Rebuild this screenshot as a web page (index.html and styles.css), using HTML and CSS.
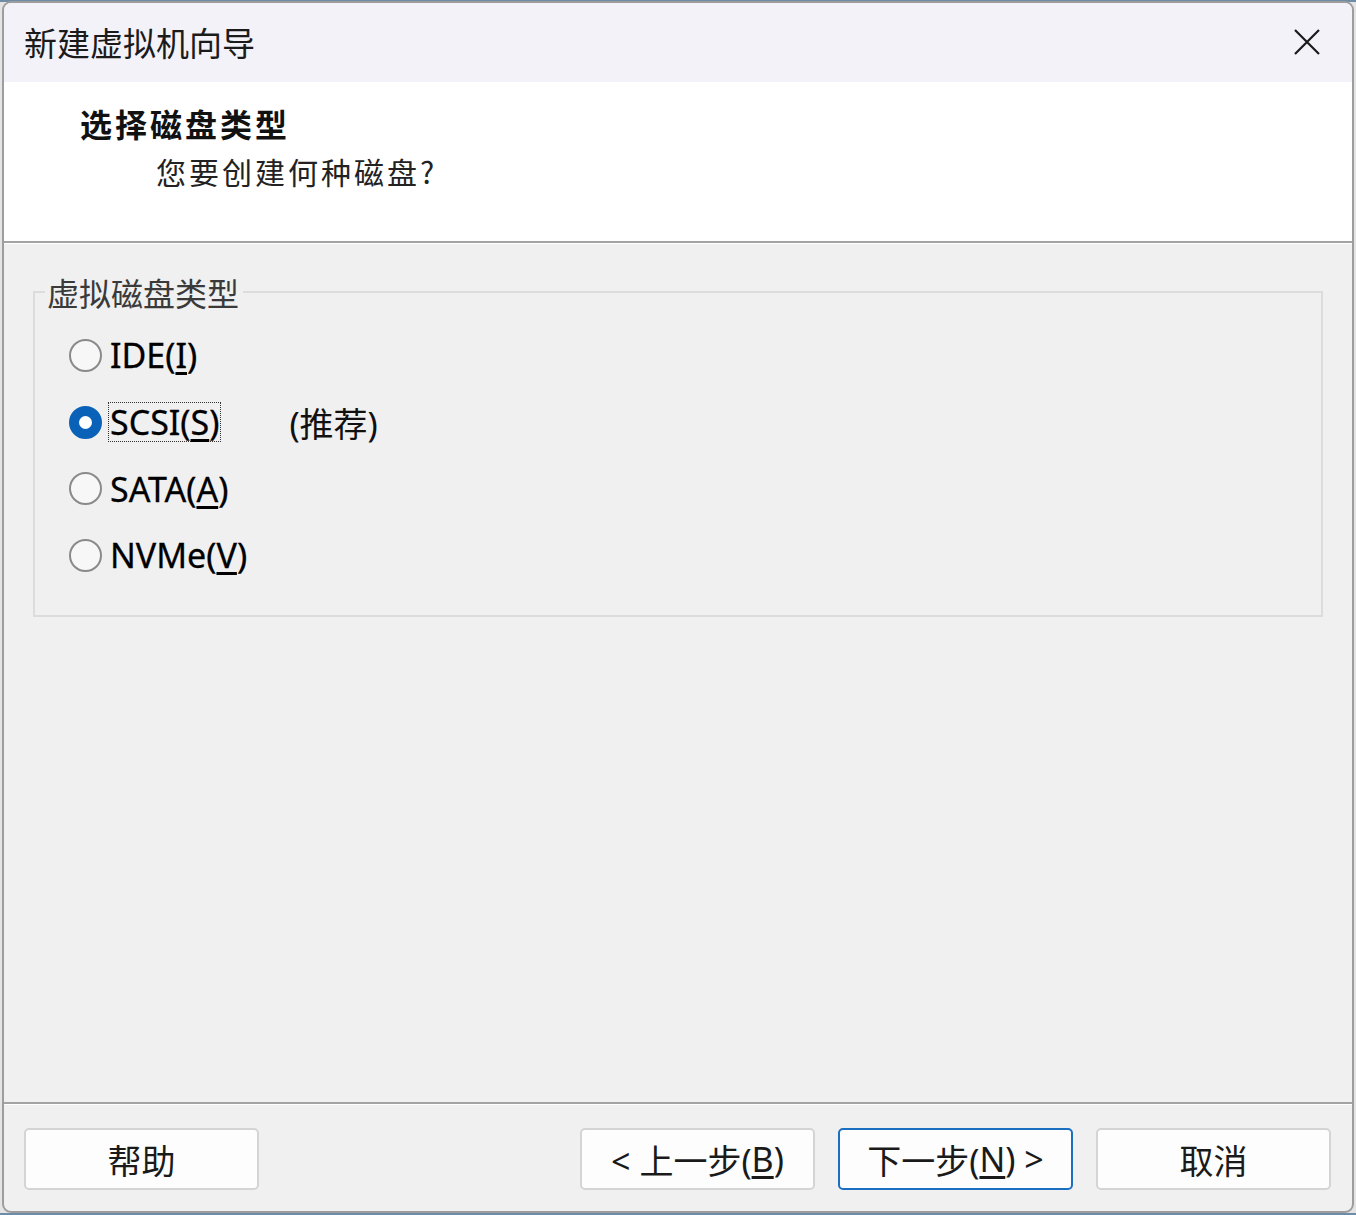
FILE: index.html
```html
<!DOCTYPE html>
<html>
<head>
    <meta charset="UTF-8">
    <title>新建虚拟机向导</title>
    <link rel="stylesheet" href="styles.css">
</head>
<body>
<div class="window">
    <div class="titlebar">
        <span class="title">新建虚拟机向导</span>
        <svg class="close" width="26" height="26" viewBox="0 0 26 26">
            <path d="M1 1 L25 25 M25 1 L1 25" stroke="#1a1a1a" stroke-width="2.2" fill="none"/>
        </svg>
    </div>
    <div class="header">
        <div class="head-title">选择磁盘类型</div>
        <div class="head-sub">您要创建何种磁盘?</div>
    </div>
    <div class="content">
        <fieldset class="group">
            <legend>虚拟磁盘类型</legend>
            <div class="row">
                <span class="radio"></span>
                <span class="label">IDE(<u>I</u>)</span>
            </div>
            <div class="row">
                <span class="radio checked"></span>
                <span class="label focus">SCSI(<u>S</u>)</span>
                <span class="note">(推荐)</span>
            </div>
            <div class="row">
                <span class="radio"></span>
                <span class="label">SATA(<u>A</u>)</span>
            </div>
            <div class="row">
                <span class="radio"></span>
                <span class="label">NVMe(<u>V</u>)</span>
            </div>
        </fieldset>
    </div>
    <div class="footer">
        <div class="btn">帮助</div>
        <div class="spacer"></div>
        <div class="btn">&lt; 上一步(<u>B</u>)</div>
        <div class="btn primary">下一步(<u>N</u>) &gt;</div>
        <div class="btn">取消</div>
    </div>
</div>
</body>
</html>
```

FILE: styles.css
```css
*{ margin:0; padding:0; box-sizing:border-box;}
body{
    background: linear-gradient(#6f8ca6 0, #6f8ca6 2px, #e4e4e4 2px);
    font-family: "Noto Sans", "Noto Sans CJK SC", sans-serif;
    color: #111;
}
.window{
    display: flex;
    flex-direction: column;
    height: 1212px;
    margin: 1px 2px 0 2px;
    border: 2px solid #9d9d9d;
    border-radius: 9px;
    overflow: hidden;
    background: #f0f0f0;
}
.titlebar{
    display: flex;
    align-items: center;
    justify-content: space-between;
    height: 79px;
    padding: 0 32px 2px 20px;
    background: #f3f2f8;
}
.title{
    font-family: "Noto Sans CJK SC", sans-serif;
    font-size: 33px;
    color: #1b1b1b;
}
.header{
    height: 161px;
    padding: 18px 0 0 76px;
    background: #fff;
    border-bottom: 2px solid #a3a3a3;
    box-shadow: 0 1px 0 #fff;
}
.head-title{
    font-family: "Noto Sans CJK SC", sans-serif;
    font-weight: bold;
    font-size: 32px;
    line-height: 46px;
    letter-spacing: 3px;
}
.head-sub{
    font-family: "Noto Sans CJK SC", sans-serif;
    font-size: 30px;
    line-height: 50px;
    padding-left: 76px;
    letter-spacing: 3px;
    color: #222;
}
.content{
    flex: 1;
    padding: 28px 29px 0 29px;
    border-bottom: 2px solid #a3a3a3;
    box-shadow: 0 1px 0 #fff;
}
.group{
    border: 2px solid #dcdcdc;
    padding: 9px 0 26px 0;
}
.group legend{
    margin-left: 10px;
    padding: 0 4px 0 2px;
    font-family: "Noto Sans CJK SC", sans-serif;
    font-size: 32px;
    line-height: 42px;
    color: #3a3a3a;
}
.row{
    display: flex;
    align-items: center;
    height: 66.7px;
    padding-left: 34px;
}
.radio{
    width: 33px;
    height: 33px;
    border: 2px solid #8a8a8a;
    border-radius: 50%;
    background: #f7f7f7;
    margin-right: 6px;
}
.radio.checked{
    border: 10px solid #0a62b8;
    background: #fff;
}
.label{
    font-size: 34px;
    line-height: 38px;
    padding: 0 1px;
    border: 1px dotted transparent;
    color: #000;
    -webkit-text-stroke: 0.3px #000;
}
.label u{
    text-underline-offset: 4px;
}
.label.focus{
    border-color: #333;
}
.note{
    margin-left: 68px;
    font-size: 34px;
    color: #111;
}
.footer{
    display: flex;
    align-items: flex-start;
    gap: 23px;
    height: 107px;
    padding: 24px 21px 0 20px;
}
.spacer{
    flex: 1;
}
.btn{
    width: 235px;
    height: 62px;
    display: flex;
    align-items: center;
    justify-content: center;
    background: #fdfdfd;
    border: 2px solid #d4d4d4;
    border-radius: 5px;
    font-family: "Noto Sans", "Noto Sans CJK SC", sans-serif;
    font-size: 34px;
    color: #1a1a1a;
}
.btn u{
    text-underline-offset: 4px;
}
.btn.primary{
    border-color: #1a6fc0;
}
```
